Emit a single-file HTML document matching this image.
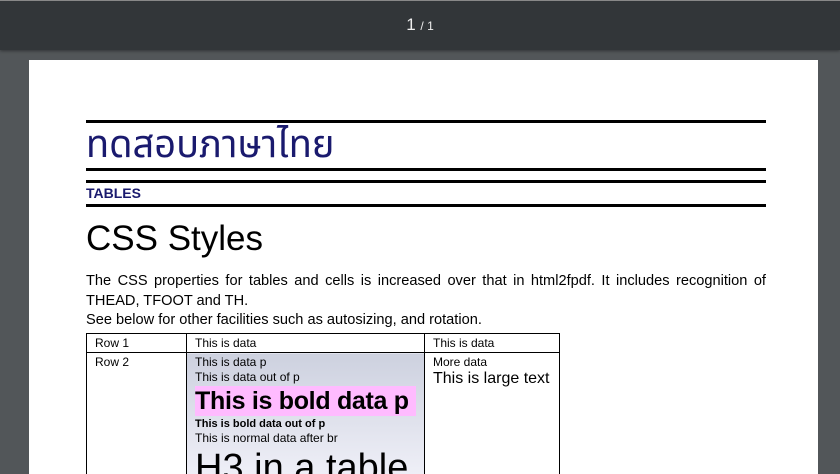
<!DOCTYPE html>
<html style="width:840px;height:474px;overflow:hidden"><head><meta charset="utf-8"><style>
*{margin:0;padding:0;box-sizing:border-box}
body{width:840px;height:474px;overflow:hidden;background:#525659;font-family:"Liberation Sans",sans-serif;position:relative}
.bar{position:absolute;left:0;top:0;width:840px;height:50px;background:#323639;border-top:1px solid #888;box-shadow:0 1px 3px rgba(0,0,0,.4)}
.pg{position:absolute;left:0;width:840px;top:14px;text-align:center;color:#eee;font-size:17px}
.pg small{font-size:12px}
.page{position:absolute;left:29px;top:60px;width:789px;height:414px;background:#fff}
.a{position:absolute}
.hr{position:absolute;left:86px;width:680px;height:2.5px;background:#000}
table{table-layout:fixed}
td{border:1px solid #000;vertical-align:top;font-size:12px;padding:2px 8px;line-height:14px;white-space:nowrap;overflow:hidden}
</style></head><body>
<div class="bar"><div class="pg">1 <small>/ 1</small></div></div>
<div class="page"></div>
<div class="hr" style="top:120px"></div>
<div class="a" style="left:86px;top:122px;font-size:38px;color:#1a1a6e;line-height:46px;font-family:'Liberation Sans','Noto Sans Thai','Loma','Garuda',sans-serif">ทดสอบภาษาไทย</div>
<div class="hr" style="top:168px"></div>
<div class="hr" style="top:180px"></div>
<div class="a" style="left:86px;top:185px;font-size:14px;font-weight:bold;color:#1a1a6e">TABLES</div>
<div class="hr" style="top:204px"></div>
<div class="a" style="left:86px;top:219px;font-size:35px;line-height:40px">CSS Styles</div>
<div class="a" style="left:86px;top:272px;width:680px;font-size:14.6px;line-height:19.5px;text-align:justify;text-align-last:left">The CSS properties for tables and cells is increased over that in html2fpdf. It includes recognition of THEAD, TFOOT and TH.<br>See below for other facilities such as autosizing, and rotation.</div>
<table class="a" style="left:86px;top:333px;border-collapse:collapse;width:473px">
<colgroup><col style="width:100px"><col style="width:238px"><col style="width:135px"></colgroup>
<tr><td>Row 1</td><td>This is data</td><td>This is data</td></tr>
<tr><td style="height:140px">Row 2</td>
<td style="background:linear-gradient(#cdd1df,#f4f4fb 100%)">This is data p<br><div style="margin-top:1px">This is data out of p</div><div style="background:#ffbbff;font-weight:bold;font-size:25px;letter-spacing:-0.3px;line-height:30px;margin:2px 0 0">This is bold data p</div><b style="font-size:11px;line-height:14px">This is bold data out of p</b><br>This is normal data after br<div style="font-size:38px;line-height:46px">H3 in a table</div></td>
<td>More data<div style="font-size:16px;line-height:19px">This is large text</div></td></tr>
</table>
</body></html>
